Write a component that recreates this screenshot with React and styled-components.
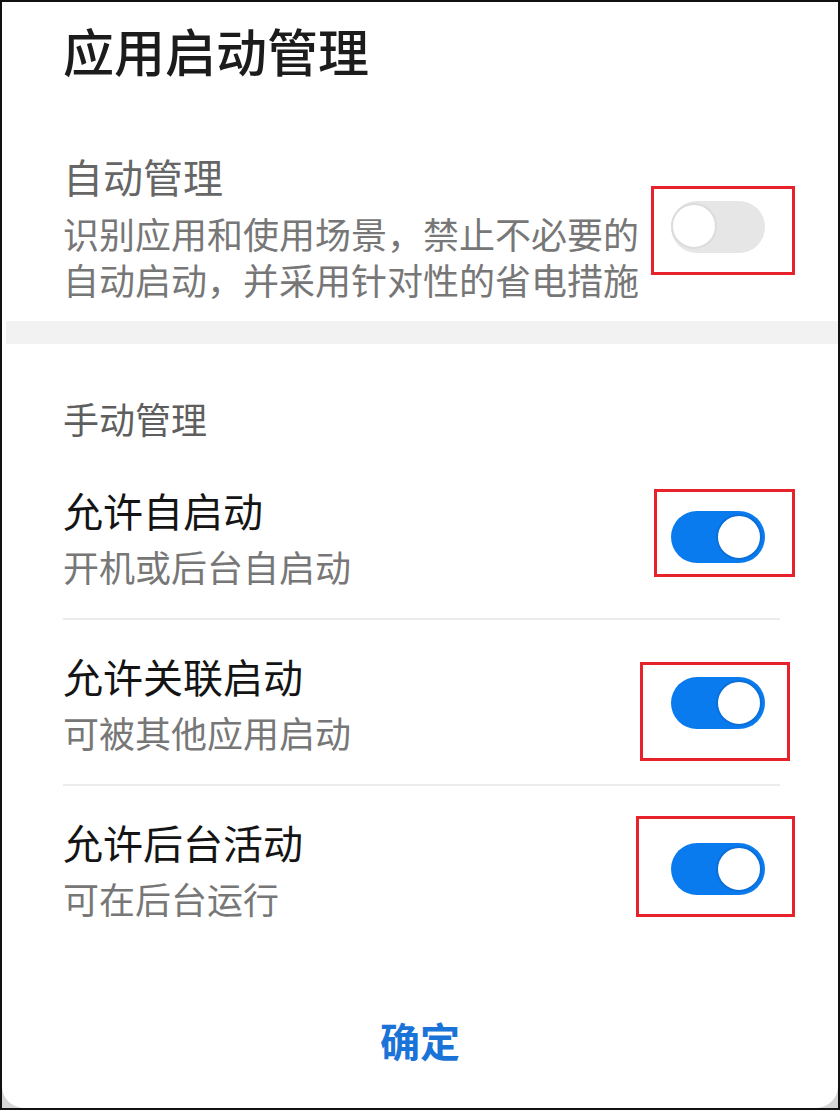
import React from 'react';
import styled, { createGlobalStyle } from 'styled-components';

const GlobalStyle = createGlobalStyle`
    html, body {
        margin: 0;
        padding: 0;
        background: #ffffff;
    }
    body {
        font-family: "Noto Sans CJK SC", "Noto Sans", sans-serif;
    }
`;

const Frame = styled.div`
    width: 840px;
    height: 1110px;
    box-sizing: border-box;
    border: 2px solid #111;
    background: #d6d6d6;
    overflow: hidden;
`;

const Dialog = styled.div`
    height: 100%;
    background: #fff;
    border-radius: 0 0 22px 22px;
    display: flex;
    flex-direction: column;
`;

const Title = styled.h1`
    margin: 0;
    padding: 18px 0 0 61px;
    font-size: 51px;
    line-height: 60px;
    font-weight: 500;
    color: #1c1c1c;
`;

const AutoSection = styled.div`
    display: flex;
    align-items: center;
    padding: 71px 73px 0 61px;
`;

const TextBlock = styled.div`
    flex: 1;
    display: flex;
    flex-direction: column;
`;

const AutoHeading = styled.div`
    font-size: 40px;
    line-height: 50px;
    color: #666;
`;

const Description = styled.div`
    width: 580px;
    margin-top: 9px;
    font-size: 36px;
    line-height: 46px;
    color: #777;
`;

const Band = styled.div`
    height: 23px;
    margin: 19px 0 0 4px;
    background: #f2f2f2;
`;

const SectionLabel = styled.div`
    padding: 52px 0 14px 61px;
    font-size: 36px;
    line-height: 44px;
    color: #5e5e5e;
`;

const Row = styled.div`
    display: flex;
    align-items: center;
    margin: 0 58px 0 61px;
    padding: 31px 15px 29px 0;
    border-bottom: ${p => (p.last ? 'none' : '2px solid #ececec')};
`;

const RowTitle = styled.div`
    font-size: 40px;
    line-height: 50px;
    color: #141414;
`;

const RowSub = styled.div`
    margin-top: 8px;
    font-size: 36px;
    line-height: 46px;
    color: #777;
`;

const ToggleWrap = styled.div`
    position: relative;
    flex: none;
`;

const Track = styled.div`
    position: relative;
    width: 94px;
    height: 52px;
    border-radius: 26px;
    background: ${p => (p.on ? '#0a7bef' : '#e6e6e6')};
`;

const Knob = styled.div`
    position: absolute;
    top: ${p => (p.on ? '3px' : '2px')};
    left: ${p => (p.on ? '45px' : '0')};
    width: 46px;
    height: 46px;
    box-sizing: border-box;
    border-radius: 50%;
    background: #fff;
    border: 2px solid ${p => (p.on ? '#0a6fd8' : '#dcdcdc')};
`;

const Marker = styled.div`
    position: absolute;
    border: 3px solid #e8222a;
    pointer-events: none;
`;

const ConfirmBar = styled.div`
    display: flex;
    justify-content: center;
    padding-top: 60px;
`;

const ConfirmButton = styled.button`
    border: none;
    background: none;
    padding: 0;
    font-family: inherit;
    font-size: 40px;
    line-height: 60px;
    font-weight: 700;
    color: #1a74d8;
`;

function Toggle({ on, box }) {
    return (
        <ToggleWrap>
            <Track on={on}>
                <Knob on={on} />
            </Track>
            <Marker style={{ top: -box[0], right: -box[1], bottom: -box[2], left: -box[3] }} />
        </ToggleWrap>
    );
}

const rows = [
    { title: '允许自启动', sub: '开机或后台自启动', box: [22, 30, 14, 17] },
    { title: '允许关联启动', sub: '可被其他应用启动', box: [15, 25, 32, 31] },
    { title: '允许后台活动', sub: '可在后台运行', box: [27, 30, 22, 35] },
];

export default function App() {
    return (
        <>
            <GlobalStyle />
            <Frame>
                <Dialog>
                    <Title>应用启动管理</Title>
                    <AutoSection>
                        <TextBlock>
                            <AutoHeading>自动管理</AutoHeading>
                            <Description>识别应用和使用场景，禁止不必要的自动启动，并采用针对性的省电措施</Description>
                        </TextBlock>
                        <Toggle on={false} box={[15, 30, 22, 20]} />
                    </AutoSection>
                    <Band />
                    <SectionLabel>手动管理</SectionLabel>
                    {rows.map((r, i) => (
                        <Row key={r.title} last={i === rows.length - 1}>
                            <TextBlock>
                                <RowTitle>{r.title}</RowTitle>
                                <RowSub>{r.sub}</RowSub>
                            </TextBlock>
                            <Toggle on box={r.box} />
                        </Row>
                    ))}
                    <ConfirmBar>
                        <ConfirmButton>确定</ConfirmButton>
                    </ConfirmBar>
                </Dialog>
            </Frame>
        </>
    );
}
